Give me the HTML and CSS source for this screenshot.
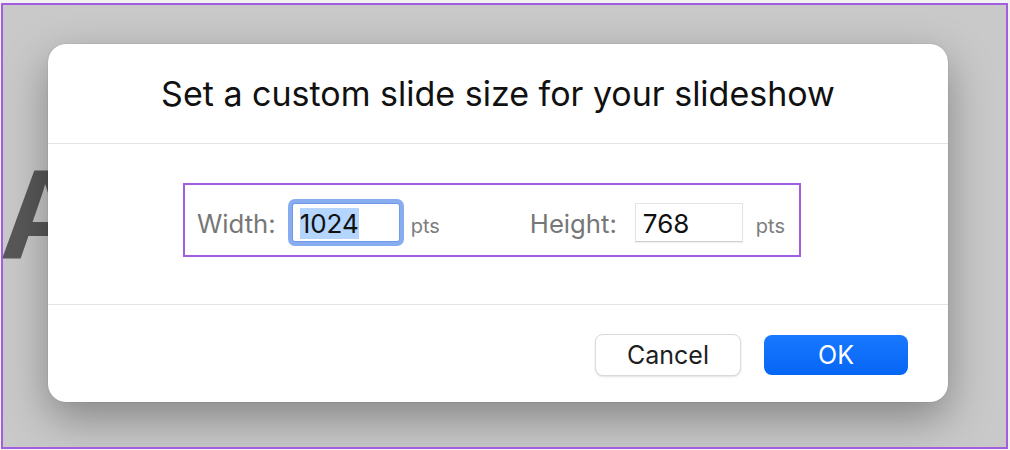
FILE: index.html
```html
<!DOCTYPE html>
<html lang="en">
<head>
    <meta charset="UTF-8">
    <meta name="viewport" content="width=device-width, initial-scale=1.0">
    <title>Slide Size</title>
    <link rel="stylesheet" href="styles.css">
</head>
<body>
    <div class="stage">
        <div class="slide-letter">A</div>
        <div class="dialog">
            <header class="dialog-header">
                <h1>Set a custom slide size for your slideshow</h1>
            </header>
            <div class="dialog-body">
                <div class="size-row">
                    <div class="field">
                        <span class="field-label label-width">Width:</span>
                        <div class="num-box focused"><span class="selected">1024</span></div>
                        <span class="unit">pts</span>
                    </div>
                    <div class="field field-height">
                        <span class="field-label">Height:</span>
                        <div class="num-box">768</div>
                        <span class="unit unit-wide">pts</span>
                    </div>
                </div>
            </div>
            <footer class="dialog-footer">
                <button class="btn btn-cancel">Cancel</button>
                <button class="btn btn-ok">OK</button>
            </footer>
        </div>
    </div>
</body>
</html>
```

FILE: styles.css
```css
body {
    margin: 0;
    padding: 0;
    background-color: #f2f2f2;
    font-family: Inter, "Liberation Sans", sans-serif;
}
.stage {
    position: relative;
    box-sizing: border-box;
    width: 1007px;
    height: 446px;
    margin: 3px 0 0 1px;
    padding: 39px 0 0 45px;
    border: 2px solid #a35ee0;
    background: #c9c9c9;
    overflow: hidden;
}
.slide-letter {
    position: absolute;
    left: -4px;
    top: 146px;
    font-family: "Liberation Sans", Arial, sans-serif;
    font-weight: bold;
    font-size: 128px;
    line-height: 1;
    color: #585858;
}
.dialog {
    position: relative;
    width: 900px;
    height: 358px;
    background: #fff;
    border-radius: 18px;
    box-shadow: 0 16px 44px rgba(0, 0, 0, 0.34), 0 0 1px rgba(0, 0, 0, 0.35);
}
.dialog-header {
    height: 99px;
    display: flex;
    align-items: center;
    justify-content: center;
    border-bottom: 1px solid #e3e3e3;
}
.dialog-header h1 {
    margin: 0;
    font-size: 34px;
    font-weight: 400;
    color: #111;
}
.dialog-body {
    height: 161px;
    padding-top: 39px;
    box-sizing: border-box;
    border-bottom: 1px solid #e3e3e3;
}
.size-row {
    box-sizing: border-box;
    width: 618px;
    height: 74px;
    margin-left: 135px;
    padding: 18px 14px 0 12px;
    border: 2px solid #a35ee0;
    display: flex;
}
.field {
    display: flex;
    align-items: baseline;
}
.field-height {
    margin-left: auto;
}
.field-label {
    font-size: 25.7px;
    color: #777;
    margin-right: 18px;
}
.label-width {
    margin-right: 16px;
}
.num-box {
    box-sizing: border-box;
    width: 108px;
    height: 39px;
    padding: 0 7px;
    font-size: 26px;
    line-height: 39px;
    color: #111;
    background: #fff;
    border: 1px solid #e4e4e4;
    border-bottom-color: #cfcfcf;
    box-shadow: 0 1px 1px rgba(0, 0, 0, 0.06);
}
.num-box.focused {
    border-color: #6f9ae8;
    border-radius: 3px;
    box-shadow: 0 0 0 4px #88acf0;
}
.selected {
    background: #b4d5fe;
    line-height: 31px;
    display: inline-block;
}
.unit {
    font-size: 20px;
    color: #7d7d7d;
    margin-left: 11px;
}
.unit-wide {
    margin-left: 13px;
}
.dialog-footer {
    height: 96px;
    box-sizing: border-box;
    padding: 4px 40px 0 0;
    display: flex;
    align-items: center;
    justify-content: flex-end;
}
.btn {
    font-family: Inter, "Liberation Sans", sans-serif;
    font-size: 25px;
    border-radius: 8px;
    cursor: pointer;
}
.btn-cancel {
    width: 146px;
    height: 42px;
    background: #fff;
    color: #1e1e1e;
    border: 1px solid #dadada;
    box-shadow: 0 1px 2px rgba(0, 0, 0, 0.12);
}
.btn-ok {
    width: 144px;
    height: 40px;
    margin-left: 23px;
    background: linear-gradient(#1878ff, #0666f5);
    color: #fff;
    border: none;
}
```
